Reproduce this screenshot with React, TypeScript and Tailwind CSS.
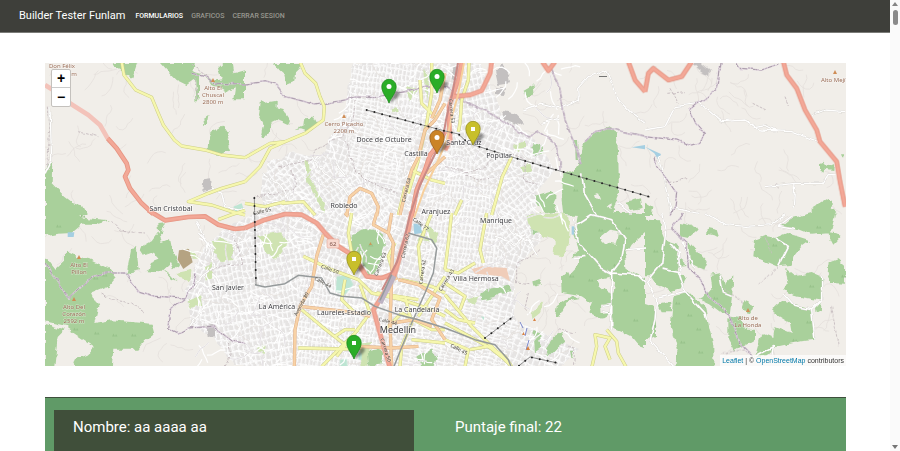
import React from "react";

type Feature = [tile: keyof typeof TILES, d: string];

/* The map is stored as eight tiles; features use tile-local units (3 units per pixel). */
const TILES = {
  A: [45, 60],
  B: [245, 60],
  C: [445, 60],
  D: [645, 60],
  E: [45, 213],
  F: [245, 213],
  G: [445, 213],
  H: [645, 213],
} as const;

const WOOD: Feature[] = [
  ["A", "M200 9L278 9L262 55L245 45ZM348 9L450 9L445 35L470 42L425 75L395 60L380 45ZM480 42L500 60L530 55L522 25L538 9L560 9L565 40L600 30L600 118L565 118L570 85L545 95L520 80L500 78ZM490 240L500 215L530 198L540 210L555 215L545 240L555 270L520 285L488 268ZM0 330L22 305L20 370L60 410L80 425L110 435L125 465L0 465ZM475 175L490 165L485 195L478 195ZM450 50L462 40L462 110L455 130Z"],
  ["B", "M85 9L170 9L165 25L150 40L148 62L125 72L118 45L100 30ZM48 120L60 128L95 122L95 145L115 150L135 180L128 195L95 180L75 190L75 215L58 235L46 230L55 190L42 165ZM148 208L175 195L178 172L205 170L215 190L195 215L165 205Z"],
  ["C", "M235 90L265 73L268 95L245 112ZM440 225L490 200L515 215L520 290L522 400L510 430L500 468L400 468L355 465L350 420L355 345L385 330L405 300L410 260ZM268 410L320 395L335 410L325 430L335 455L305 460L285 440ZM268 250L290 255L292 280L270 288L258 268ZM545 425L585 415L590 445L555 450ZM390 240L396 240L400 300L392 300Z"],
  ["D", "M525 310L535 305L545 318L570 308L568 330L540 326L535 338L525 330ZM500 445L545 418L560 425L560 445L578 460L500 465ZM0 425L25 440L20 468L0 468ZM588 280L598 280L594 294Z"],
  ["E", "M0 0L95 0L120 15L195 22L150 35L110 35L80 60L40 62L0 70ZM0 130L30 168L60 140L60 113L100 132L135 138L190 165L212 195L195 215L140 238L160 280L148 330L200 322L320 332L328 362L300 385L280 410L205 410L200 465L0 465ZM245 180L258 112L270 98L275 120L282 172ZM285 105L320 85L342 55L340 30L360 28L345 62L350 90L375 80L380 105L402 155L385 172L375 150L345 178L305 175L315 150L340 140L330 118L300 128ZM355 170L375 185L395 208L380 200Z"],
  ["F", "M320 75L335 55L360 48L390 50L412 68L420 95L410 130L400 175L375 187L350 155L345 130L312 100ZM368 412L405 405L415 425L405 455L372 458ZM520 425L560 410L575 435L565 465L525 465Z"],
  ["G", "M400 0L600 0L600 60L560 95L540 130L545 170L600 195L600 405L585 400L560 370L530 355L505 345L500 300L465 320L430 295L440 270L410 250L350 240L348 190L385 155L380 135L402 110L385 65L395 30ZM105 245L130 225L190 215L200 235L165 240L150 255L110 262ZM330 315L335 280L380 248L405 258L368 265L340 315ZM262 205L290 198L290 212L265 218ZM265 350L285 360L290 400L270 415ZM325 372L350 360L360 385L340 400L310 430L300 410ZM375 410L385 410L380 440ZM260 45L280 60L260 65Z"],
  ["H", "M0 20L45 22L50 50L62 80L100 92L95 130L130 160L100 175L125 195L110 222L75 235L40 220L20 190L0 190ZM105 30L130 35L160 48L130 75L105 70ZM190 45L215 50L222 72L185 62ZM130 85L185 145L175 170L135 150ZM40 275L75 268L80 295L50 295ZM85 250L130 240L180 280L190 330L205 400L205 465L90 465L98 410L78 330ZM200 185L225 180L240 215L265 190L262 240L255 300L230 300L190 270L160 255L205 230ZM250 310L285 315L300 350L330 350L330 380L270 415L250 380ZM300 262L328 275L315 300L290 295ZM330 80L360 68L390 75L425 60L495 82L470 100L450 125L440 155L395 160L325 130ZM410 40L440 15L500 0L570 0L558 60L500 65L450 45ZM545 55L590 65L565 92ZM548 150L580 138L600 155L600 212L560 210L545 180ZM420 165L450 190L500 180L535 195L525 262L450 250L415 230L430 205ZM385 285L410 265L500 290L510 380L470 385L400 400L370 425L330 430L350 360L385 375L390 340L440 360L435 330L385 300ZM510 285L530 262L528 290L512 300ZM0 270L30 280L30 370L0 385Z"],
];

const CLEARINGS: Feature[] = [
  ["E", "M28 465L38 372L65 345L150 402L125 425L85 440L90 465ZM0 325L68 340L65 352L0 332Z"],
  ["G", "M465 75L495 50L522 55L515 95L480 90ZM450 205L490 195L510 210L505 240L480 232ZM468 278L500 275L500 296L470 300ZM355 150L400 125L405 150L372 185ZM545 112L600 108L600 192L555 170Z"],
  ["C", "M450 405L462 400L468 415L455 420ZM485 440L500 430L500 450Z"],
  ["H", "M100 160L130 155L128 180L105 182Z"],
];

const PARK: Feature[] = [
  ["B", "M178 300L190 302L198 355L218 400L240 430L235 455L205 400L188 370ZM440 150L455 142L458 155L442 160ZM480 85L520 80L500 120ZM535 30L552 50L548 120L540 95Z"],
  ["E", "M500 85L530 75L562 90L565 140L530 148L510 120ZM395 180L440 170L435 205L405 198ZM425 265L465 250L472 275L435 285ZM480 160L500 150L505 190L485 200ZM430 100L460 140L440 140Z"],
  ["F", "M40 68L110 55L130 95L110 115L90 142L58 112ZM110 68L122 90L95 100L80 80ZM35 400L65 398L62 420L40 415ZM545 35L580 60L570 95L548 85ZM530 50L552 88L520 85ZM345 395L375 390L370 461L350 461Z"],
  ["G", "M245 5L350 0L375 20L372 90L360 130L325 125L330 80L290 70L250 35ZM260 300L298 265L285 300L262 318ZM60 260L100 250L90 275Z"],
  ["C", "M200 260L240 240L240 262L215 275ZM225 320L260 310L262 335L235 340Z"],
];

const GREY: Feature[] = [
  ["A", "M475 358L498 355L502 390L472 396Z"],
  ["C", "M150 30L175 9L190 45L195 70L160 75ZM150 85L180 85L175 105L150 102ZM172 152L210 160L238 190L220 195L175 175ZM25 20L40 12L38 60L20 60Z"],
  ["D", "M140 9L170 9L195 30L192 50L170 35Z"],
  ["E", "M485 338L515 335L510 370L488 372Z"],
];

const WATER: Feature[] = [
  ["C", "M560 262L600 255L600 268Z"],
  ["D", "M0 260L48 282L40 300L28 280Z"],
  ["F", "M505 32L528 32L530 60L508 64Z"],
  ["E", "M68 58L88 58L86 72L68 72Z"],
  ["G", "M380 40L388 40L388 65L380 65Z"],
];

const SPORT: Feature[] = [
  ["F", "M275 190L310 185L325 215L300 245L272 235ZM285 440L305 438L308 461L285 461ZM340 420L350 420L350 440L340 440Z"],
  ["A", "M565 440L590 430L598 452L572 458Z"],
  ["G", "M108 310L118 312L116 322Z"],
];

const WHITE_ROADS: Feature[] = [
  ["C", "M235 150L290 130L350 145L400 120L398 85L430 50L480 30L500 60L520 120L560 160L600 190M410 340L418 400L455 465M520 430L560 460M290 190L340 175"],
  ["D", "M165 130L230 185L300 180L350 210L440 215L520 245M500 165L540 150L600 155M0 210L60 200L90 140L160 130M445 440L450 370L530 370L550 340L575 342M40 290L55 350L70 420L80 460M90 445L160 460M360 380L450 370M300 180L330 200L360 195L400 215"],
  ["H", "M50 0L62 60L50 150L5 205L35 260L30 320L15 380L90 465M50 165L100 175L120 235L180 300L185 320M40 255L120 235M180 0L240 35L300 40L380 35L420 5M390 75L430 100L400 160M415 240L450 280L500 290L530 260L530 190M500 290L510 380M225 185L235 240L260 250M75 90L100 120L105 175M110 85L150 165M330 430L385 400L380 430M440 10L400 40L450 50"],
  ["G", "M385 20L400 85L470 165L500 180L500 350M395 35L440 5L500 20L540 80L530 140L500 180L580 185L600 205M540 110L600 105M470 280L500 275L495 300L470 295M385 135L420 130M160 0L200 60L255 80L280 130M150 70L210 95L240 60"],
  ["E", "M455 20L470 60L500 110L510 160L470 190L440 230M460 60L490 90L480 130M480 290L450 320L430 350"],
  ["B", "M50 340L80 360L110 380L130 420M200 290L240 340L300 390L330 440M270 310L300 345M60 420L140 430"],
  ["A", "M0 340L20 300L15 140M500 380L530 400L540 440L600 450"],
];

const TRACKS: Feature[] = [
  ["A", "M10 140L14 200L8 320M100 215L160 230M440 15L500 60M450 50L455 120"],
  ["B", "M330 120L325 180L290 230L210 270L200 300L150 310L100 320M140 330L155 370L145 390L30 412M300 240L330 330L360 360L460 400"],
  ["C", "M0 320L60 335L110 330L140 300M60 345L100 360L170 350M200 280L240 300L235 360L280 370"],
  ["E", "M170 240L200 260L260 270L300 300M480 180L520 160L590 155M560 70L580 100L590 155M200 25L230 55L300 60M540 461L560 420L550 390"],
  ["G", "M220 150L255 130L285 110M215 155L215 210L250 215M250 240L240 290L250 300M340 350L390 360M370 400L390 410L385 461"],
  ["H", "M230 420L300 410M240 230L300 270M360 70L380 120M560 280L580 400M340 215L400 160"],
  ["D", "M70 100L120 95M75 85L100 130M320 130L360 150M60 370L130 355M420 110L430 135M395 370L400 385"],
];

const BOUNDARY: Feature[] = [
  ["A", "M440 40L480 50L510 70L600 72"],
  ["B", "M0 72L60 65L95 75L120 110L180 125L210 135L300 120L330 108L400 110L480 95L520 82L600 80"],
  ["C", "M0 80L60 125L140 160L200 200L250 232L280 215L330 250L345 300L345 330M320 30L345 90L360 180L395 270L405 310M420 245L450 215L490 205L560 220L600 228"],
  ["D", "M228 9L218 85L135 150L152 190L178 220L165 250L140 258L95 240L0 230M275 9L285 25L350 30L400 12M30 290L35 320L60 350L95 400L90 440L78 465"],
  ["H", "M115 0L80 45L125 90L130 165L170 200L190 250L250 300L270 350L290 400L320 430"],
  ["E", "M0 150L70 255L130 200L180 180L240 180L280 235L330 250L420 255L440 225L450 180M420 255L375 290L368 345L400 360L430 345L500 340L560 385L600 390"],
];

const YELLOW: Feature[] = [
  ["A", "M230 5L237 45L272 90L320 112L340 160L355 195L388 240L410 258L480 270L530 285L600 293M600 365L530 385L490 400L430 425L500 435L560 455L600 465"],
  ["B", "M0 293L75 250L120 245L180 220L235 180L238 140L225 110L212 70L180 40L165 5M0 365L45 320L75 265L120 245M560 5L560 100L545 190L520 300L490 400M525 60L530 130L570 170M500 330L560 360L600 370M480 380L460 465M110 430L175 425L210 465M0 430L60 440L120 425"],
  ["C", "M72 5L70 60L50 120L45 190L40 215M200 290L172 350L150 430L140 465M30 465L50 420"],
  ["E", "M520 20L560 5L600 -8"],
  ["F", "M175 130L260 170L340 200L380 240L470 260L560 290L600 310M170 290L230 340L300 395M160 405L300 408L350 405M275 430L330 360L375 300M230 461L290 400L340 350M600 190L560 250L520 310M320 0L310 60L320 120M345 215L375 300M395 240L520 260M450 90L430 130L445 180M480 250L500 330L470 400L465 461M560 0L520 100L530 200M600 240L560 220L470 200M270 370L300 350L330 350M420 350L470 300L560 350L600 350M500 380L600 390M300 200L290 260L330 300"],
  ["G", "M20 0L10 90L0 170M125 0L105 110L115 150M0 170L40 180L90 150M0 210L60 250L45 290M0 245L80 340L140 400L200 461M0 330L100 385L180 430L200 461M75 410L130 400L180 440M0 290L40 320L90 330M0 380L70 410L60 461M440 465L455 400L450 365L495 375L480 400L495 440M485 350L515 385L520 420L545 465"],
];

const ORANGE: Feature[] = [
  ["B", "M600 130L570 180L540 210L520 290L500 330L480 400L465 465M305 468L315 410L345 385L380 400L400 440L395 468M600 40L585 120L560 175M545 340L600 290"],
  ["F", "M235 65L215 130L200 220L165 280L150 350L148 465M300 0L310 10M395 0L385 35L430 60L440 0M460 200L520 215L585 255L560 320L600 380M440 200L435 330L440 461M340 400L440 405L520 400M165 280L340 300L375 310M430 60L445 90L440 170L455 200M560 340L510 320L440 330"],
];

const TRUNK: Feature[] = [
  ["A", "M188 235L215 265L245 310L250 330L240 350L255 385L290 430L325 462"],
  ["B", "M600 215L575 260L555 285L540 330L515 390L500 468"],
  ["C", "M50 5L40 60L25 100L12 140L12 190L15 240L0 270M20 110L75 105L110 92L135 40L140 5M292 5L310 32L330 5M550 5L570 60L600 95"],
  ["D", "M0 95L10 40L25 25L70 60L110 50L140 5M415 5L425 45L455 85L480 150L515 210L525 245L575 305L585 365L600 440"],
  ["E", "M310 -8L360 22L430 12L480 10L520 35L570 48L600 45"],
  ["F", "M0 45L60 20L120 3L170 5L215 30L240 60L280 100L320 125L345 160L365 190L410 195L450 180M500 -5L490 50L470 110L450 180L430 220L385 290L410 380L435 465"],
];

const METRO: Feature[] = [
  ["F", "M30 215L60 222L120 212L160 187L230 195L255 240L290 250L350 255L390 280L460 305L520 320L600 345M490 60L560 80L575 105L565 180L540 240L500 330L445 465"],
  ["G", "M0 345L90 380L150 395L190 440L200 465"],
  ["F", "M440 185L405 262"],
];

const CABLE: Feature[] = [
  ["B", "M365 150L600 213L640 222L670 250L820 297L1215 411"],
  ["F", "M28 -45L33 215"],
  ["G", "M120 375L203 312M222 458L255 432L337 450"],
];

/* Street texture: [polygon, pattern id] */
const DISTRICTS: [string, string][] = [
  ["M352 63L480 63L500 112L535 140L555 170L530 200L545 235L515 270L515 320L580 350L560 366L235 366L225 345L192 325L185 290L205 245L230 225L262 212L262 175L290 152L320 158L345 110Z", "g0"],
  ["M352 66L415 63L420 120L400 190L360 170L345 130Z", "g1"],
  ["M355 100L415 118L395 195L350 165Z", "g2"],
  ["M268 160L320 160L395 200L385 230L340 215L300 220L265 205Z", "g3"],
  ["M440 140L490 160L505 210L495 280L425 260L430 190Z", "g1"],
  ["M445 130L540 180L530 240L505 260L490 180Z", "g3"],
  ["M262 225L320 235L310 280L295 366L235 366L200 320L205 280Z", "g4"],
  ["M300 275L375 300L390 366L295 366Z", "g1"],
  ["M410 280L470 270L520 330L500 366L395 366Z", "g2"],
  ["M455 63L480 63L500 110L460 140Z", "g4"],
];

const WOOD_GLYPHS = [
  [58, 226], [95, 278], [104, 275], [96, 333], [114, 335], [133, 335], [75, 329], [82, 216], [370, 245],
  [598, 170], [575, 190], [600, 230], [615, 265], [590, 280], [625, 290], [571, 276], [635, 320], [627, 228],
  [677, 303], [689, 315], [698, 329], [682, 342], [700, 352], [715, 298], [774, 245], [818, 227], [811, 286],
  [794, 340], [740, 345], [655, 251], [653, 325], [843, 276], [808, 322],
];

/* Deterministic small streams and footpaths scattered over the hills. */
const contours = (() => {
  let s = 7;
  const r = () => ((s = (s * 16807) % 2147483647) / 2147483647);
  const out: string[] = [];
  for (let i = 0; i < 330; i++) {
    let x = 45 + r() * 800;
    let y = 63 + r() * 303;
    let a = r() * 6.28;
    let d = `M${x.toFixed(1)} ${y.toFixed(1)}`;
    for (let j = 0; j < 6; j++) {
      a += (r() - 0.5) * 1.6;
      x += Math.cos(a) * 4;
      y += Math.sin(a) * 4;
      d += `L${x.toFixed(1)} ${y.toFixed(1)}`;
    }
    out.push(d);
  }
  return out;
})();

const lanes = (() => {
  let s = 91;
  const r = () => ((s = (s * 16807) % 2147483647) / 2147483647);
  const out: string[] = [];
  for (let i = 0; i < 420; i++) {
    let x = 195 + r() * 370;
    let y = 63 + r() * 303;
    if (y < 220 && x < 262 + (220 - y) * 0.7) continue;
    if (x > 500 && y > 230 && y < 300) continue;
    let a = Math.round(r() * 4) * 1.57 + 0.3;
    let d = `M${x.toFixed(1)} ${y.toFixed(1)}`;
    for (let j = 0; j < 4; j++) {
      a += (r() - 0.5) * 1.2;
      x += Math.cos(a) * 5;
      y += Math.sin(a) * 5;
      d += `L${x.toFixed(1)} ${y.toFixed(1)}`;
    }
    out.push(d);
  }
  return out;
})();

function Layer({ items, ...rest }: { items: Feature[] } & React.SVGProps<SVGGElement>) {
  return (
    <g fill="none" strokeLinejoin="round" {...rest}>
      {items.map(([t, d], i) => (
        <path key={i} d={d} transform={`translate(${TILES[t][0]} ${TILES[t][1]}) scale(0.33333)`} />
      ))}
    </g>
  );
}

const PLACES: [string, number, number, number?][] = [
  ["Doce de Octubre", 384, 142],
  ["Castilla", 416, 156],
  ["Santa Cruz", 464, 145],
  ["Popular", 499, 158],
  ["San Cristóbal", 171, 211],
  ["Robledo", 344, 208],
  ["Aranjuez", 436, 214],
  ["Manrique", 496, 223],
  ["San Javier", 228, 290],
  ["Villa Hermosa", 476, 281],
  ["La América", 277, 309],
  ["Laureles-Estadio", 344, 315],
  ["La Candelaria", 417, 312],
  ["Medellín", 398, 333, 9],
];

const PEAKS: [string[], number, number, boolean][] = [
  [["Don Félix"], 62, 68, false],
  [["m"], 74, 76, false],
  [["Alto El", "Chuscal", "2800 m"], 213, 90, true],
  [["Cerro Picacho", "2200 m"], 344, 126, true],
  [["Alto Mejía"], 835, 82, true],
  [["Alto El", "Pillon"], 79, 267, true],
  [["Alto Del", "Corazón", "2592 m"], 74, 309, true],
  [["Alto de", "La Honda"], 748, 320, true],
];

const STREETS: [string, number, number, number][] = [
  ["Calle 65", 262, 211, -14],
  ["Calle 50", 330, 269, 20],
  ["Calle 44", 323, 282, 28],
  ["Avenida 80", 301, 304, -62],
  ["Carrera 63", 380, 264, -68],
  ["Carrera 62", 405, 246, -78],
  ["Carrera 52", 422, 272, -82],
  ["Carrera 64", 406, 190, -76],
  ["Carrera 53", 452, 111, 84],
  ["Calle 77", 421, 224, 38],
  ["Carrera 43", 446, 280, -58],
  ["Calle 44", 388, 321, 14],
  ["Calle 45", 459, 349, 28],
  ["Carrera 50", 386, 350, 72],
];

type Pin = [x: number, y: number, color: string, edge: string, square: boolean];
const PINS: Pin[] = [
  [437, 93, "#2aad27", "#1f8a1d", false],
  [389, 103, "#2aad27", "#1f8a1d", false],
  [473, 145, "#c8bf2b", "#968f1d", true],
  [437, 154, "#cb8427", "#985e1c", false],
  [354, 275, "#c8bf2b", "#968f1d", true],
  [354, 359, "#2aad27", "#1f8a1d", true],
];

function MapCanvas() {
  return (
    <svg className="block h-[303px] w-full" viewBox="45 63 801 303" preserveAspectRatio="xMidYMid slice" role="img" aria-label="Mapa de Medellín">
      <defs>
        {[
          ["g0", 6, 7, 20],
          ["g1", 4, 6, 8],
          ["g2", 7, 4, 14],
          ["g3", 5, 6, -38],
          ["g4", 5, 7, -12],
        ].map(([id, w, h, rot]) => (
          <pattern key={id} id={String(id)} width={w} height={h} patternUnits="userSpaceOnUse" patternTransform={`rotate(${rot})`}>
            <rect width={w} height={h} fill="#e6e4e3" />
            <path d={`M0 0.7H${w}M0.7 0V${h}`} stroke="#fcfcfc" strokeWidth="1.4" />
          </pattern>
        ))}
        <filter id="rough" x="-5%" y="-5%" width="110%" height="110%">
          <feTurbulence type="fractalNoise" baseFrequency="0.13" numOctaves="2" seed="4" />
          <feDisplacementMap in="SourceGraphic" scale="6" xChannelSelector="R" yChannelSelector="G" />
        </filter>
        <filter id="wobble" x="-5%" y="-5%" width="110%" height="110%">
          <feTurbulence type="fractalNoise" baseFrequency="0.09" numOctaves="2" seed="9" />
          <feDisplacementMap in="SourceGraphic" scale="5" xChannelSelector="R" yChannelSelector="G" />
        </filter>
        <filter id="shadow" x="-50%" y="-50%" width="200%" height="200%">
          <feGaussianBlur stdDeviation="1.2" />
        </filter>
      </defs>

      <rect x="0" y="0" width="900" height="451" fill="#f1eee9" />
      <g filter="url(#wobble)">
        {DISTRICTS.map(([d, p], i) => (
          <path key={i} d={d} fill={`url(#${p})`} />
        ))}
      </g>
      <path d={contours.join("")} fill="none" stroke="#e4e0dc" strokeWidth="0.8" />
      <g filter="url(#rough)">
        <Layer items={PARK} fill="#cfe3b2" />
        <Layer items={WOOD} fill="#a9d09b" />
        <Layer items={CLEARINGS} fill="#f1eee9" />
        <Layer items={GREY} fill="#c3c0c0" />
      </g>
      <Layer items={[["E", "M402 112L432 108L443 148L415 168L398 140Z"]]} fill="#b5a382" />
      <Layer items={[["G", "M80 168L110 160L185 165L195 205L170 190L90 182Z"]]} fill="#f0cdb9" />
      <Layer items={WATER} fill="#a5cfe2" />
      <Layer items={SPORT} fill="#bde5d3" />
      <path d={lanes.join("")} fill="none" stroke="#fff" strokeWidth="1.2" />
      <path d={lanes.filter((_, i) => i % 4 === 0).join("")} fill="none" stroke="#cfc8cc" strokeWidth="0.6" />
      {WOOD_GLYPHS.map(([x, y]) => (
        <path key={`${x}-${y}`} d={`M${x - 2} ${y + 1.5}l1.5 -3l1.5 3zM${x + 1} ${y + 1.5}l1 -2.5l1.5 2.5z`} fill="#98c28b" />
      ))}
      <g filter="url(#wobble)">
        <Layer items={TRACKS} stroke="#c9bfc2" strokeWidth="3" strokeDasharray="8 4" />
        <Layer items={WHITE_ROADS} stroke="#d6d3cf" strokeWidth="6" />
        <Layer items={WHITE_ROADS} stroke="#fff" strokeWidth="4" />
        <Layer items={BOUNDARY} stroke="#dccfdc" strokeWidth="5" />
        <Layer items={BOUNDARY} stroke="#a99ba9" strokeWidth="3" strokeDasharray="14 4 4 4" />
      </g>
      <Layer items={YELLOW} stroke="#cccd88" strokeWidth="10" />
      <Layer items={YELLOW} stroke="#f6f7ad" strokeWidth="7" />
      <Layer items={ORANGE} stroke="#dfb08a" strokeWidth="10" />
      <Layer items={ORANGE} stroke="#f8d2a6" strokeWidth="7" />
      <Layer items={[["A", "M0 75L40 100L78 132L130 165L165 195L188 235"]]} stroke="#f3c3ba" strokeWidth="14" />
      <Layer items={TRUNK} stroke="#e59583" strokeWidth="14" />
      <Layer items={TRUNK} stroke="#f3a897" strokeWidth="9" />
      <path d="M458 63L452 95L446 120L443 138L432 160L420 185L410 215L404 240L397 262L382 290" fill="none" stroke="#c98a86" strokeWidth="2" />
      <path d="M464 63L458 95L451 120L447 140L436 165L424 190L414 218" fill="none" stroke="#f7cf9b" strokeWidth="2" />
      <path d="M394 276L380 303" stroke="#bdb3c3" strokeWidth="5" />
      <Layer items={METRO} stroke="#959a9b" strokeWidth="4.5" />
      <Layer items={CABLE} stroke="#5b5b5b" strokeWidth="2" />
      <Layer items={CABLE} stroke="#222" strokeWidth="6" strokeDasharray="0 24" strokeLinecap="round" />
      <path d="M599 76.5h8" stroke="#555" strokeWidth="0.8" />
      <path d="M527 328l-2 8M529 340l-3 10M520 322l3 6" stroke="#7a86c9" strokeWidth="1" />
      <path d="M533 321l1.5-3l1.5 3zM522 335l1.5-3l1.5 3zM526 350l2-4l2 4z" fill="#d98445" />
      <path d="M369 245l1.5-3l1.5 3z" fill="#c79a5b" />

      <rect x="327" y="239" width="12" height="9" rx="1.5" fill="#f8d9cf" stroke="#e3a594" strokeWidth="0.6" />
      <g fontFamily="'Noto Sans', sans-serif" textAnchor="middle">
        <text x="333" y="246" fontSize="6" fill="#7c5148">62</text>
        <g fontSize="5" fill="#3f3b32" stroke="#fff" strokeOpacity="0.4" strokeWidth="1" paintOrder="stroke">
          {STREETS.map(([t, x, y, a], i) => (
            <text key={i} transform={`rotate(${a} ${x} ${y})`} x={x} y={y + 2}>{t}</text>
          ))}
        </g>
        <g fontSize="6" fill="#9a6d57" stroke="#fff" strokeOpacity="0.45" strokeWidth="1" paintOrder="stroke">
          {PEAKS.map(([lines, x, y, mark]) => (
            <g key={lines.join()}>
              {mark && <path d={`M${x - 2} ${y - 8}l2 -4l2 4z`} fill="#cf8d55" stroke="none" />}
              {lines.map((l, i) => (
                <text key={l} x={x} y={y + i * 7}>{l}</text>
              ))}
            </g>
          ))}
        </g>
        <g fill="#3f3f43" stroke="#fff" strokeOpacity="0.7" strokeWidth="1.5" paintOrder="stroke">
          {PLACES.map(([t, x, y, size = 7]) => (
            <text key={t} x={x} y={y} fontSize={size}>{t}</text>
          ))}
        </g>
      </g>

      {PINS.map(([x, y, color, edge, square]) => (
        <g key={`${x}-${y}`} transform={`translate(${x} ${y})`}>
          <path d="M0 0L4-9Q8-14 11-10Q12-6 0 0Z" fill="#000" opacity="0.4" filter="url(#shadow)" />
          <path d="M0 0C-1.5-5-7.2-9.5-7.2-16.5A7.2 7.2 0 0 1 7.2-16.5C7.2-9.5 1.5-5 0 0Z" fill={color} stroke={edge} strokeWidth="0.8" />
          {square ? (
            <rect x="-2" y="-18" width="4" height="4" fill="#fff" />
          ) : (
            <circle cy="-16.5" r="2.5" fill="#fff" />
          )}
        </g>
      ))}
    </svg>
  );
}

function Scrollbar() {
  return (
    <div className="flex w-[10px] shrink-0 flex-col items-center justify-between bg-[#fafafa] py-[2px]" aria-hidden="true">
      <div className="flex flex-col items-center gap-1">
        <svg width="6" height="4" viewBox="0 0 6 4"><path d="M3 0L6 4H0Z" fill="#858585" /></svg>
        <span className="h-[15px] w-[5px] rounded-full bg-[#8a8a8a]" />
      </div>
      <svg width="6" height="4" viewBox="0 0 6 4"><path d="M3 4L6 0H0Z" fill="#757575" /></svg>
    </div>
  );
}

export default function App() {
  return (
    <div className="flex h-screen overflow-hidden bg-white font-['Roboto',sans-serif]">
      <div className="min-w-0 flex-1 overflow-hidden">
        <nav className="flex h-[33px] items-center gap-[10px] border-b border-[#7b7c78] bg-[#3e3f3a] px-[19px]">
          <a href="#" className="text-[11px] leading-4 text-white">Builder Tester Funlam</a>
          <ul className="flex gap-2 text-[7px] leading-4 font-medium text-[#98978f] uppercase">
            <li><a href="#formularios" className="text-white">Formularios</a></li>
            <li><a href="#graficos">Graficos</a></li>
            <li><a href="#salir">Cerrar sesion</a></li>
          </ul>
        </nav>

        <main className="pt-[30px] pr-11 pl-[45px]">
          <section className="relative overflow-hidden">
            <MapCanvas />
            <div className="absolute top-[6px] left-[6px] flex w-5 flex-col rounded-[2px] border border-[#c4c1bd] bg-white font-['Liberation_Sans',sans-serif] text-[14px] font-bold text-black">
              <button type="button" aria-label="Acercar" className="flex h-[18px] items-center justify-center border-b border-[#ccc]">+</button>
              <button type="button" aria-label="Alejar" className="flex h-[18px] items-center justify-center">−</button>
            </div>
            <p className="absolute right-0 bottom-0 bg-white/70 px-[2px] font-['Liberation_Sans',sans-serif] text-[7px] leading-[11px] text-[#333]">
              <a href="#leaflet" className="text-[#0078a8]">Leaflet</a> | © <a href="#osm" className="text-[#0078a8]">OpenStreetMap</a> contributors
            </p>
          </section>

          <section className="mt-[31px] flex gap-[22px] border-t border-[#3e4f3c] bg-[#609a67] pt-3 pl-[9px] text-[15px] leading-5 text-white">
            <h2 className="h-16 w-5/11 bg-[#404f3a] px-[19px] pt-[7px]">Nombre: aa aaaa aa</h2>
            <h2 className="h-16 px-[19px] pt-[7px]">Puntaje final: 22</h2>
          </section>
        </main>
      </div>
      <Scrollbar />
    </div>
  );
}
